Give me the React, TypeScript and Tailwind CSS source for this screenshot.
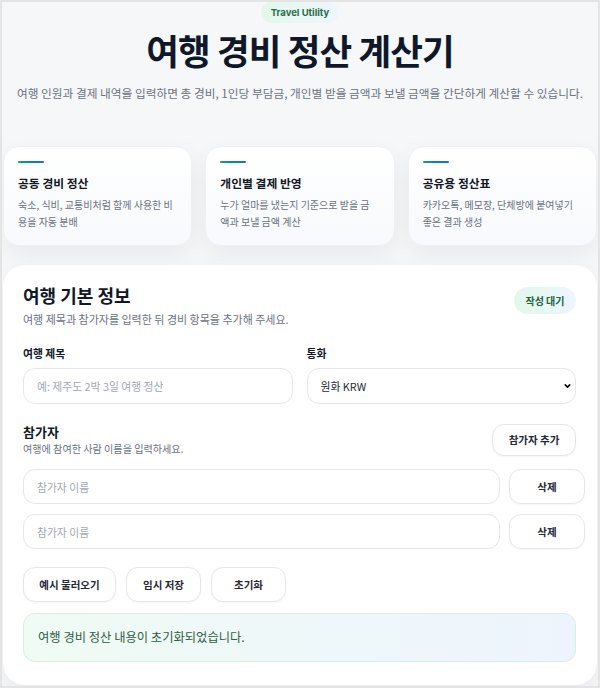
import React from 'react';
import { ChevronDown } from 'lucide-react';

// 설명 문구는 참고 화면과 같은 위치에서 줄바꿈
const features = [
  { title: '공동 경비 정산', lines: ['숙소, 식비, 교통비처럼 함께 사용한 비', '용을 자동 분배'] },
  { title: '개인별 결제 반영', lines: ['누가 얼마를 냈는지 기준으로 받을 금', '액과 보낼 금액 계산'] },
  { title: '공유용 정산표', lines: ['카카오톡, 메모장, 단체방에 붙여넣기', '좋은 결과 생성'] },
];

const Button = ({ children, className = '' }: { children: React.ReactNode; className?: string }) => (
  <button
    className={`rounded-[12px] border border-[#e5e7eb] bg-white text-[10.5px] font-bold text-[#1f2937] shadow-[0_1px_2px_rgba(15,23,42,0.04)] ${className}`}
  >
    {children}
  </button>
);

const App = () => {
  return (
    <div className="h-[688px] overflow-hidden border-2 border-[#e4e4e4] bg-[#f6f7f9] px-px font-['Noto_Sans_CJK_KR','Inter',sans-serif]">
      {/* 상단 헤더 */}
      <header className="flex flex-col items-center">
        <span className="rounded-full bg-gradient-to-r from-[#e2f8eb] to-[#eef6fd] px-[10px] py-[4px] font-['Inter',sans-serif] text-[9.5px] font-bold leading-[13px] text-[#2a6b4a]">
          Travel Utility
        </span>
        <h1 className="mt-[7px] text-[35.5px] font-bold leading-[40px] tracking-tight text-[#0f172a]">
          여행 경비 정산 계산기
        </h1>
        <p className="mt-[15px] text-[11.7px] leading-[16px] text-[#6b7280]">
          여행 인원과 결제 내역을 입력하면 총 경비, 1인당 부담금, 개인별 받을 금액과 보낼 금액을 간단하게 계산할 수 있습니다.
        </p>
      </header>

      {/* 기능 카드 */}
      <section className="mt-[45px] grid grid-cols-3 gap-[13px]">
        {features.map((f) => (
          <div
            key={f.title}
            className="h-[100px] rounded-[16px] border border-[#eef0f3] bg-gradient-to-b from-white to-[#f7f9fc] px-[14px] pt-[14px] shadow-[0_8px_22px_rgba(15,23,42,0.06)]"
          >
            <div className="h-[2px] w-[26px] rounded-full bg-gradient-to-r from-[#22a05a] to-[#2563eb]" />
            <h3 className="mt-[11px] text-[11.8px] font-bold leading-[18px] text-[#111827]">{f.title}</h3>
            <p className="mt-[4px] text-[10px] leading-[17px] text-[#6b7280]">
              {f.lines.map((l) => (
                <span key={l} className="block whitespace-nowrap">
                  {l}
                </span>
              ))}
            </p>
          </div>
        ))}
      </section>

      {/* 기본 정보 패널 */}
      <main className="mt-[19px] rounded-[22px] bg-white pb-[23px] pl-[20px] pr-[21px] pt-[18px] shadow-[0_10px_30px_rgba(15,23,42,0.06)]">
        <div className="flex items-start justify-between">
          <div>
            <h2 className="text-[18px] font-bold leading-[24px] text-[#111827]">여행 기본 정보</h2>
            <p className="mt-[4px] text-[11px] leading-[16px] text-[#6b7280]">
              여행 제목과 참가자를 입력한 뒤 경비 항목을 추가해 주세요.
            </p>
          </div>
          <span className="mt-[4px] flex h-[27px] w-[62px] items-center justify-center rounded-full bg-gradient-to-r from-[#e2f8eb] to-[#eef6fd] text-[10px] font-bold text-[#22623f]">
            작성 대기
          </span>
        </div>

        <div className="mt-[18px] grid grid-cols-2 gap-[14px]">
          <label className="flex flex-col">
            <span className="text-[10.8px] font-bold leading-[16px] text-[#111827]">여행 제목</span>
            <input
              placeholder="예: 제주도 2박 3일 여행 정산"
              className="mt-[7px] h-[36px] rounded-[12px] border border-[#e5e7eb] px-[13px] text-[10.8px] text-[#1f2937] outline-none placeholder:text-[#a3a8b1]"
            />
          </label>
          <label className="flex flex-col">
            <span className="text-[10.8px] font-bold leading-[16px] text-[#111827]">통화</span>
            <div className="relative mt-[7px]">
              <select className="h-[36px] w-full appearance-none rounded-[12px] border border-[#e5e7eb] bg-white px-[13px] text-[10.8px] text-[#1f2937] outline-none">
                <option>원화 KRW</option>
              </select>
              <ChevronDown
                className="pointer-events-none absolute right-[4px] top-1/2 h-[9px] w-[9px] -translate-y-1/2 text-black"
                strokeWidth={4}
              />
            </div>
          </label>
        </div>

        <div className="mt-[19px] flex items-center justify-between">
          <div>
            <h3 className="text-[13px] font-bold leading-[18px] text-[#111827]">참가자</h3>
            <p className="mt-px text-[10.1px] leading-[14px] text-[#6b7280]">여행에 참여한 사람 이름을 입력하세요.</p>
          </div>
          <Button className="h-[32px] w-[84px]">참가자 추가</Button>
        </div>

        <div className="mr-[-9px] mt-[13px] flex flex-col gap-[10px]">
          {[0, 1].map((i) => (
            <div key={i} className="flex gap-[9px]">
              <input
                placeholder="참가자 이름"
                className="h-[35px] flex-1 rounded-[12px] border border-[#e5e7eb] px-[13px] text-[10.8px] outline-none placeholder:text-[#a3a8b1]"
              />
              <Button className="h-[35px] w-[76px]">삭제</Button>
            </div>
          ))}
        </div>

        <div className="mt-[18px] flex gap-[10px]">
          <Button className="h-[35px] w-[93px]">예시 불러오기</Button>
          <Button className="h-[35px] w-[75px]">임시 저장</Button>
          <Button className="h-[35px] w-[75px]">초기화</Button>
        </div>

        <div className="mt-[11px] flex h-[49px] items-center rounded-[12px] border border-[#d6f0e2] bg-gradient-to-r from-[#effbf4] to-[#edf4fd] px-[14px] text-[12.3px] text-[#2f5d45]">
          여행 경비 정산 내용이 초기화되었습니다.
        </div>
      </main>
    </div>
  );
};

export default App;
